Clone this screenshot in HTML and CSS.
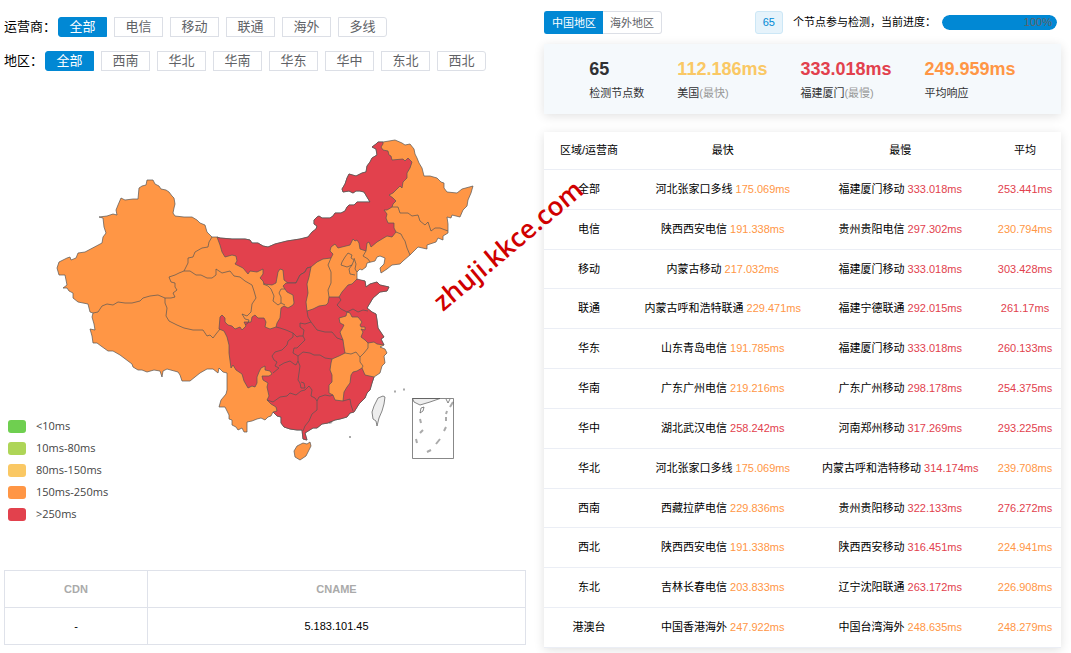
FILE: index.html
```html
<!DOCTYPE html>
<html lang="zh-CN">
<head>
    <meta charset="UTF-8">
    <meta name="viewport" content="width=device-width, initial-scale=1.0">
    <title>网站测速</title>
    <link rel="stylesheet" href="styles.css">
</head>
<body>

    <div class="page">
        <div class="left">
            <div class="filter">
                <span class="filter-label">运营商：</span>
                <div class="filter-group">
                    <button class="active">全部</button>
                    <button>电信</button>
                    <button>移动</button>
                    <button>联通</button>
                    <button>海外</button>
                    <button>多线</button>
                </div>
            </div>
            <div class="filter">
                <span class="filter-label">地区：</span>
                <div class="filter-group">
                    <button class="active">全部</button>
                    <button>西南</button>
                    <button>华北</button>
                    <button>华南</button>
                    <button>华东</button>
                    <button>华中</button>
                    <button>东北</button>
                    <button>西北</button>
                </div>
            </div>

            <div class="chart">
                <svg class="map" viewBox="4 90 522 450">
                    <!-- 全国轮廓 -->
                    <path class="ok" d="M147 180L153 180L155 184L159 186L161 189L166 190L169 192L172 196L174 198L175 204L174 208L173 213L175 216L184 217L192 217L197 220L200 223L205 225L207 232L212 237L217 237L220 238L232 239L245 239L250 240L252 243L258 243L263 246L268 247L275 244L287 241L300 239L308 237L312 232L316 229L317 226L314 224L314 220L317 217L319 216L322 218L330 218L333 216L335 213L341 213L345 211L347 207L349 205L354 205L357 202L364 202L370 202L367 197L364 192L360 191L356 191L353 193L349 191L343 192L342 189L345 184L347 178L349 174L356 176L362 173L366 172L367 166L370 162L372 158L377 155L376 149L372 147L376 144L378 142L383 142L389 141L395 140L402 143L405 145L410 144L414 149L415 154L417 158L419 163L422 168L424 176L430 176L437 178L441 182L444 183L444 188L447 192L457 193L462 189L473 186L471 193L468 200L467 206L463 210L460 217L452 215L451 218L447 217L448 224L448 233L443 236L443 240L438 238L436 242L433 243L427 245L427 249L418 247L415 250L410 255L403 261L400 264L392 265L387 269L381 273L380 268L384 264L385 258L380 256L377 257L375 261L367 263L366 267L362 270L360 269L357 272L357 277L357 280L365 281L366 287L370 284L377 282L380 285L389 287L387 291L380 292L373 298L367 308L372 312L376 314L377 320L378 328L384 337L381 339L384 345L380 347L385 349L387 353L384 356L385 363L382 366L380 373L374 377L372 383L370 390L367 393L365 398L359 404L354 412L350 413L347 417L340 419L335 420L328 423L322 424L317 428L313 428L305 433L307 440L303 439L302 430L297 430L290 429L284 427L281 423L281 417L277 416L273 412L271 416L268 417L265 420L261 418L257 419L252 421L247 422L247 432L244 432L242 428L238 430L236 427L232 425L232 420L229 419L229 415L225 407L219 407L221 400L226 394L227 390L227 373L223 372L219 368L218 373L213 369L207 369L200 373L195 377L190 381L182 381L180 375L178 372L167 369L163 371L162 377L160 371L154 370L147 372L142 370L138 370L133 367L132 364L128 361L124 358L120 355L113 351L108 351L101 346L97 343L93 343L92 336L90 329L95 330L94 324L92 317L93 313L90 312L88 304L83 303L78 302L73 298L73 293L69 291L67 288L63 288L67 285L65 275L59 275L57 268L59 262L67 258L70 257L71 260L76 258L78 253L85 252L102 243L103 237L106 233L104 227L103 218L99 217L107 216L113 214L117 215L116 210L118 205L121 198L125 200L133 199L138 199L139 188L142 186L146 185Z"/>
                    <!-- 内蒙古 -->
                    <path class="slow" d="M383 142L383 144L381 147L383 150L388 151L389 155L391 156L392 160L403 159L405 161L408 158L412 162L410 168L407 173L407 178L403 182L402 188L400 186L393 193L389 195L393 198L396 201L393 204L392 207L387 210L384 210L387 214L386 218L388 223L394 223L394 228L396 232L392 237L387 236L377 242L371 247L369 242L367 243L366 251L360 249L359 243L357 240L355 241L353 239L350 245L338 248L335 244L331 247L330 251L333 254L331 258L323 259L317 262L311 267L307 268L305 272L300 275L296 283L288 283L284 280L283 270L280 269L278 272L276 283L272 285L264 284L263 281L260 278L263 274L263 269L257 272L250 271L248 274L243 268L239 266L235 264L237 261L236 256L232 255L225 257L222 252L220 245L217 237L220 238L232 239L245 239L250 240L252 243L258 243L263 246L268 247L275 244L287 241L300 239L308 237L312 232L316 229L317 226L314 224L314 220L317 217L319 216L322 218L330 218L333 216L335 213L341 213L345 211L347 207L349 205L354 205L357 202L364 202L370 202L367 197L364 192L360 191L356 191L353 193L349 191L343 192L342 189L345 184L347 178L349 174L356 176L362 173L366 172L367 166L370 162L372 158L377 155L376 149L372 147L376 144L378 142Z"/>
                    <!-- 陕西至广东、山东至江苏 -->
                    <path class="slow" d="M311 267L309 277L307 284L308 293L306 302L307 311L313 309L319 306L326 305L328 303L329 297L334 297L339 297L342 292L348 285L352 284L357 279L365 281L366 287L370 284L377 282L380 285L389 287L387 291L380 292L373 298L367 308L372 312L376 314L377 320L378 328L384 337L381 339L384 345L377 344L374 342L368 343L365 340L361 337L363 332L361 329L365 330L365 327L361 327L360 325L362 322L358 317L352 317L350 313L347 312L346 316L339 318L340 323L344 325L342 329L340 332L341 335L343 340L344 347L345 353L339 356L332 359L331 363L330 370L332 375L332 382L329 385L329 393L333 395L335 400L343 401L344 392L347 387L350 383L351 375L353 372L357 371L362 368L365 375L374 377L372 383L370 390L367 393L365 398L359 404L354 412L350 413L347 417L340 419L335 420L328 423L322 424L317 428L313 428L305 433L307 440L303 439L302 430L297 430L290 429L284 427L281 423L281 417L277 416L273 412L277 411L276 407L271 404L267 400L269 396L267 387L268 383L263 380L262 376L269 376L272 374L270 371L265 370L265 366L261 368L259 372L257 377L257 383L255 387L252 386L248 388L244 381L242 374L236 370L233 365L231 368L229 353L229 345L227 337L224 331L219 329L220 317L222 315L225 318L225 322L228 325L232 326L235 329L240 327L242 330L246 326L244 322L251 322L252 317L255 315L258 318L264 318L266 322L265 327L270 329L276 327L277 323L280 318L281 308L284 306L288 308L293 305L294 303L293 295L287 292L285 289L283 286L286 283L288 283L296 283L300 275L305 272L307 268Z"/>

                    <!-- 省界 -->
                    <path class="line" d="M307 311L308 317L311 322L305 324L300 323L300 327L304 330L303 336L299 336L297 337L293 333L286 330L280 328L276 327
                        M311 322L317 330L325 332L332 332L337 338L343 340
                        M339 297L341 300L337 305L341 309L347 312L353 309L358 312L363 310L368 311
                        M293 333L293 337L288 341L287 345L282 350L275 352L272 356L274 360L277 362L275 366L279 368L273 373
                        M303 336L305 340L302 343L297 348L294 348L293 353L298 356L298 361L296 365L294 364L290 361L284 363L279 366
                        M298 356L303 352L310 353L314 355L320 355L325 358L332 359
                        M298 361L300 366L299 373L298 380L300 383L301 388L305 388L304 383L301 382
                        M267 400L273 402L280 397L287 396L290 393L296 395L301 391L305 390L309 386L312 390L311 396L315 398L317 401L319 397L325 395L330 396L333 395
                        M317 401L317 410L312 414L309 421L305 426L303 431
                        M343 401L350 399L351 405L353 411"/>
                    <path class="line" d="M212 237L209 242L208 247L202 248L195 252L193 257L188 258L188 263L184 271L179 273L175 275L169 277L171 282L175 283L175 287L177 290L173 293L175 297L171 298L165 298L158 295L150 296L143 298L140 301L132 303L125 303L118 302L113 305L107 304L102 306L98 312L93 313
                        M165 298L165 303L167 308L166 316L169 321L177 325L184 328L193 330L198 330L203 330L207 336L210 335L213 338L216 334L220 329
                        M184 271L190 271L196 275L201 275L207 278L212 278L216 275L216 269L222 273L230 271L234 276L240 277L245 281L252 285L254 291L256 298L252 304L251 312L247 316L242 314L245 319L249 320L248 323L245 325
                        M263 284L268 286L271 289L274 296L273 301L278 305L281 303L281 297L279 293L281 289L285 289M281 303L285 305
                        M331 258L328 265L331 272L331 283L328 290L329 297
                        M342 262L345 257L348 253L352 255L351 258L354 260L352 265L347 267L341 265Z
                        M354 258L356 264L355 269L357 272M352 265L349 269L350 274L355 275
                        M366 251L363 256L368 259L370 262
                        M396 232L401 234L403 238L405 241L407 248L410 255
                        M392 207L398 207L400 213L408 213L412 216L418 215L420 221L425 225L428 222L431 231L435 228L440 228L448 231
                        M345 353L351 354L356 352L360 357L360 362L363 366L362 368M360 357L364 353L368 348L368 343"/>

                    <!-- 海南、台湾 -->
                    <path class="ok" d="M303 443L307 444L310 442L311 446L309 450L306 456L300 460L295 457L294 451L297 446Z"/>
                    <path class="none" d="M383 396L385 397L384 404L382 411L379 418L377 426L376 421L373 419L372 412L374 406L378 398Z"/>
                    <path class="dash" d="M394 391.5h2M403 389.5h2M350 436v2M329 423l3 -1"/>

                    <!-- 南海诸岛 -->
                    <path class="none" d="M412.5 398.5H440L430 402L420 405L414 402Z"/>
                    <path class="inset" d="M412.5 398.5H453.5V458.5H412.5Z"/>
                    <path class="line" d="M446 399L448 403L450 399M420 413l1 -5l3 -1l-1 4z"/>
                    <path class="dash" d="M453 402l-3 5M447 411l-1 3M446 417v4M446 427l-2 4M440 439l-4 5M431 450l-4 2M417 443l-1 -4M420 433l3 -3M421 423l-1 -4"/>
                </svg>
                <ul class="legend">
                    <li><i class="level-1"></i>&lt;10ms</li>
                    <li><i class="level-2"></i>10ms-80ms</li>
                    <li><i class="level-3"></i>80ms-150ms</li>
                    <li><i class="level-4"></i>150ms-250ms</li>
                    <li><i class="level-5"></i>&gt;250ms</li>
                </ul>
            </div>

            <table class="cname-table">
                <colgroup><col class="col-cdn"><col></colgroup>
                <tr><th>CDN</th><th>CNAME</th></tr>
                <tr><td>-</td><td>5.183.101.45</td></tr>
            </table>
        </div>

        <div class="right">
            <div class="toolbar">
                <div class="tabs">
                    <button class="active">中国地区</button><button>海外地区</button>
                </div>
                <div class="status">
                    <span class="tag">65</span>
                    <span class="status-text">个节点参与检测，当前进度：</span>
                    <div class="progress"><div class="progress-bar" style="width: 100%">100%</div></div>
                </div>
            </div>

            <div class="summary">
                <div class="stat"><b>65</b><p>检测节点数</p></div>
                <div class="stat"><b class="yellow">112.186ms</b><p>美国<span>(最快)</span></p></div>
                <div class="stat"><b class="red">333.018ms</b><p>福建厦门<span>(最慢)</span></p></div>
                <div class="stat"><b class="orange">249.959ms</b><p>平均响应</p></div>
            </div>

            <table class="result-table">
                <colgroup><col class="col-area"><col class="col-node"><col class="col-node"><col class="col-avg"></colgroup>
                <thead>
                    <tr><th>区域/运营商</th><th>最快</th><th>最慢</th><th>平均</th></tr>
                </thead>
                <tbody>
                    <tr><td>全部</td><td>河北张家口多线 <span class="orange">175.069ms</span></td><td>福建厦门移动 <span class="red">333.018ms</span></td><td class="red">253.441ms</td></tr>
                    <tr><td>电信</td><td>陕西西安电信 <span class="orange">191.338ms</span></td><td>贵州贵阳电信 <span class="red">297.302ms</span></td><td class="orange">230.794ms</td></tr>
                    <tr><td>移动</td><td>内蒙古移动 <span class="orange">217.032ms</span></td><td>福建厦门移动 <span class="red">333.018ms</span></td><td class="red">303.428ms</td></tr>
                    <tr><td>联通</td><td>内蒙古呼和浩特联通 <span class="orange">229.471ms</span></td><td>福建宁德联通 <span class="red">292.015ms</span></td><td class="red">261.17ms</td></tr>
                    <tr><td>华东</td><td>山东青岛电信 <span class="orange">191.785ms</span></td><td>福建厦门移动 <span class="red">333.018ms</span></td><td class="red">260.133ms</td></tr>
                    <tr><td>华南</td><td>广东广州电信 <span class="orange">219.216ms</span></td><td>广东广州移动 <span class="red">298.178ms</span></td><td class="red">254.375ms</td></tr>
                    <tr><td>华中</td><td>湖北武汉电信 <span class="red">258.242ms</span></td><td>河南郑州移动 <span class="red">317.269ms</span></td><td class="red">293.225ms</td></tr>
                    <tr><td>华北</td><td>河北张家口多线 <span class="orange">175.069ms</span></td><td>内蒙古呼和浩特移动 <span class="red">314.174ms</span></td><td class="orange">239.708ms</td></tr>
                    <tr><td>西南</td><td>西藏拉萨电信 <span class="orange">229.836ms</span></td><td>贵州贵阳移动 <span class="red">322.133ms</span></td><td class="red">276.272ms</td></tr>
                    <tr><td>西北</td><td>陕西西安电信 <span class="orange">191.338ms</span></td><td>陕西西安移动 <span class="red">316.451ms</span></td><td class="orange">224.941ms</td></tr>
                    <tr><td>东北</td><td>吉林长春电信 <span class="orange">203.833ms</span></td><td>辽宁沈阳联通 <span class="red">263.172ms</span></td><td class="orange">226.908ms</td></tr>
                    <tr><td>港澳台</td><td>中国香港海外 <span class="orange">247.922ms</span></td><td>中国台湾海外 <span class="orange">248.635ms</span></td><td class="orange">248.279ms</td></tr>
                </tbody>
            </table>
        </div>

        <div class="watermark">zhuji.kkce.com</div>
    </div>

</body>
</html>
```

FILE: styles.css
```css
* {
    box-sizing: border-box;
}
body {
    margin: 0;
    font-family: "Liberation Sans", "Noto Sans CJK SC", sans-serif;
    font-size: 11px;
    line-height: 15px;
    color: #000;
    background-color: #fff;
}
button {
    font-family: inherit;
    padding: 0;
    color: #606266;
    background-color: #fff;
    border: 1px solid #dcdfe6;
    cursor: pointer;
}
button.active {
    color: #fff;
    background-color: #0188d4;
    border-color: #0188d4;
}
.page {
    position: relative;
    display: grid;
    grid-template-columns: 522fr 517fr;
    gap: 18px;
    min-height: 100vh;
    padding: 0 10px 5px 4px;
}

/* 筛选 */
.left {
    padding-top: 17px;
}
.filter {
    display: flex;
    align-items: center;
    margin-bottom: 14px;
}
.filter-label {
    font-size: 13px;
    line-height: 20px;
    padding-right: 2px;
}
.filter-group {
    display: flex;
    gap: 7px;
}
.filter-group button {
    width: 49px;
    height: 20px;
    font-size: 13px;
    line-height: 18px;
}
.filter-group button:first-child {
    border-radius: 3px 0 0 3px;
}
.filter-group button:last-child {
    border-radius: 0 3px 3px 0;
}

/* 地图 */
.chart {
    position: relative;
    margin: 19px 0 30px;
}
.map {
    display: block;
    width: 100%;
    stroke: #555;
    stroke-opacity: 0.7;
    stroke-width: 1;
    stroke-linejoin: round;
}
.map .ok {
    fill: #ff9645;
}
.map .slow {
    fill: #e2414d;
}
.map .none {
    fill: #eee;
}
.map .line,
.map .inset,
.map .dash {
    fill: none;
}
.map .dash {
    stroke-width: 2;
    stroke-opacity: 0.5;
}
.legend {
    position: absolute;
    left: 4px;
    bottom: 15px;
    margin: 0;
    padding: 0;
    list-style: none;
    font-family: "Open Sans", "Noto Sans", sans-serif;
    color: #444;
}
.legend li {
    display: flex;
    align-items: center;
    gap: 10px;
    line-height: 22px;
}
.legend i {
    width: 18px;
    height: 13px;
    border-radius: 3px;
}
.level-1 { background-color: #6fcf50; }
.level-2 { background-color: #aed557; }
.level-3 { background-color: #fac864; }
.level-4 { background-color: #ff9645; }
.level-5 { background-color: #e2414d; }

/* CNAME */
.cname-table {
    width: 100%;
    table-layout: fixed;
    border-collapse: collapse;
    line-height: 14px;
    text-align: center;
}
.cname-table th,
.cname-table td {
    padding: 11px 0;
    border: 1px solid #dfe2ea;
}
.cname-table th {
    color: #aaa;
}
.col-cdn {
    width: 143px;
}

/* 右侧 */
.right {
    display: flex;
    flex-direction: column;
    padding-top: 11px;
}
.toolbar {
    display: flex;
    justify-content: space-between;
    padding-right: 4px;
}
.tabs {
    display: flex;
}
.tabs button {
    height: 23px;
    padding: 0 7px;
    font-size: 11px;
    line-height: 20px;
}
.tabs button:first-child {
    border-right: 0;
    border-radius: 3px 0 0 3px;
}
.tabs button:last-child {
    border-left: 0;
    border-radius: 0 3px 3px 0;
}
.status {
    display: flex;
    align-items: center;
}
.tag {
    padding: 3px 7px;
    color: #0188d4;
    background-color: #e6f3fb;
    border: 1px solid #cce7f6;
    border-radius: 3px;
}
.status-text {
    padding: 0 6px 0 10px;
}
.progress {
    width: 115px;
    background-color: #ebeef5;
    border-radius: 8px;
    overflow: hidden;
}
.progress-bar {
    padding-right: 5px;
    color: #606266;
    text-align: right;
    background-color: #0188d4;
    border-radius: 8px;
}
.summary {
    display: flex;
    justify-content: center;
    gap: 33px;
    margin-top: 10px;
    padding: 14px 0 13px;
    background-color: #f5f9fc;
    box-shadow: 0 2px 10px rgba(0,0,0,0.12);
}
.stat b {
    display: block;
    font-size: 18px;
    line-height: 22px;
    color: #303133;
}
.stat p {
    margin: 6px 0 0;
    color: #303133;
}
.stat p span {
    color: #999;
}
.result-table {
    flex: 1;
    width: 100%;
    margin-top: 18px;
    table-layout: fixed;
    border-collapse: collapse;
    text-align: center;
    box-shadow: 0 2px 10px rgba(0,0,0,0.12);
}
.result-table th,
.result-table td {
    padding: 11px 0;
    border-bottom: 1px solid #ebeef5;
    font-weight: normal;
    white-space: nowrap;
}
.col-area {
    width: 90px;
}
.col-avg {
    width: 72px;
}
.stat .yellow {
    color: #fac864;
}
.stat .red,
.red {
    color: #e2414d;
}
.stat .orange,
.orange {
    color: #ff9645;
}

.watermark {
    position: absolute;
    left: 443px;
    top: 289px;
    font-family: "Open Sans", "Noto Sans", sans-serif;
    font-size: 26px;
    font-weight: 600;
    line-height: 26px;
    color: #d00000;
    transform: rotate(-40deg);
    transform-origin: 0 23px;
    pointer-events: none;
}
```
